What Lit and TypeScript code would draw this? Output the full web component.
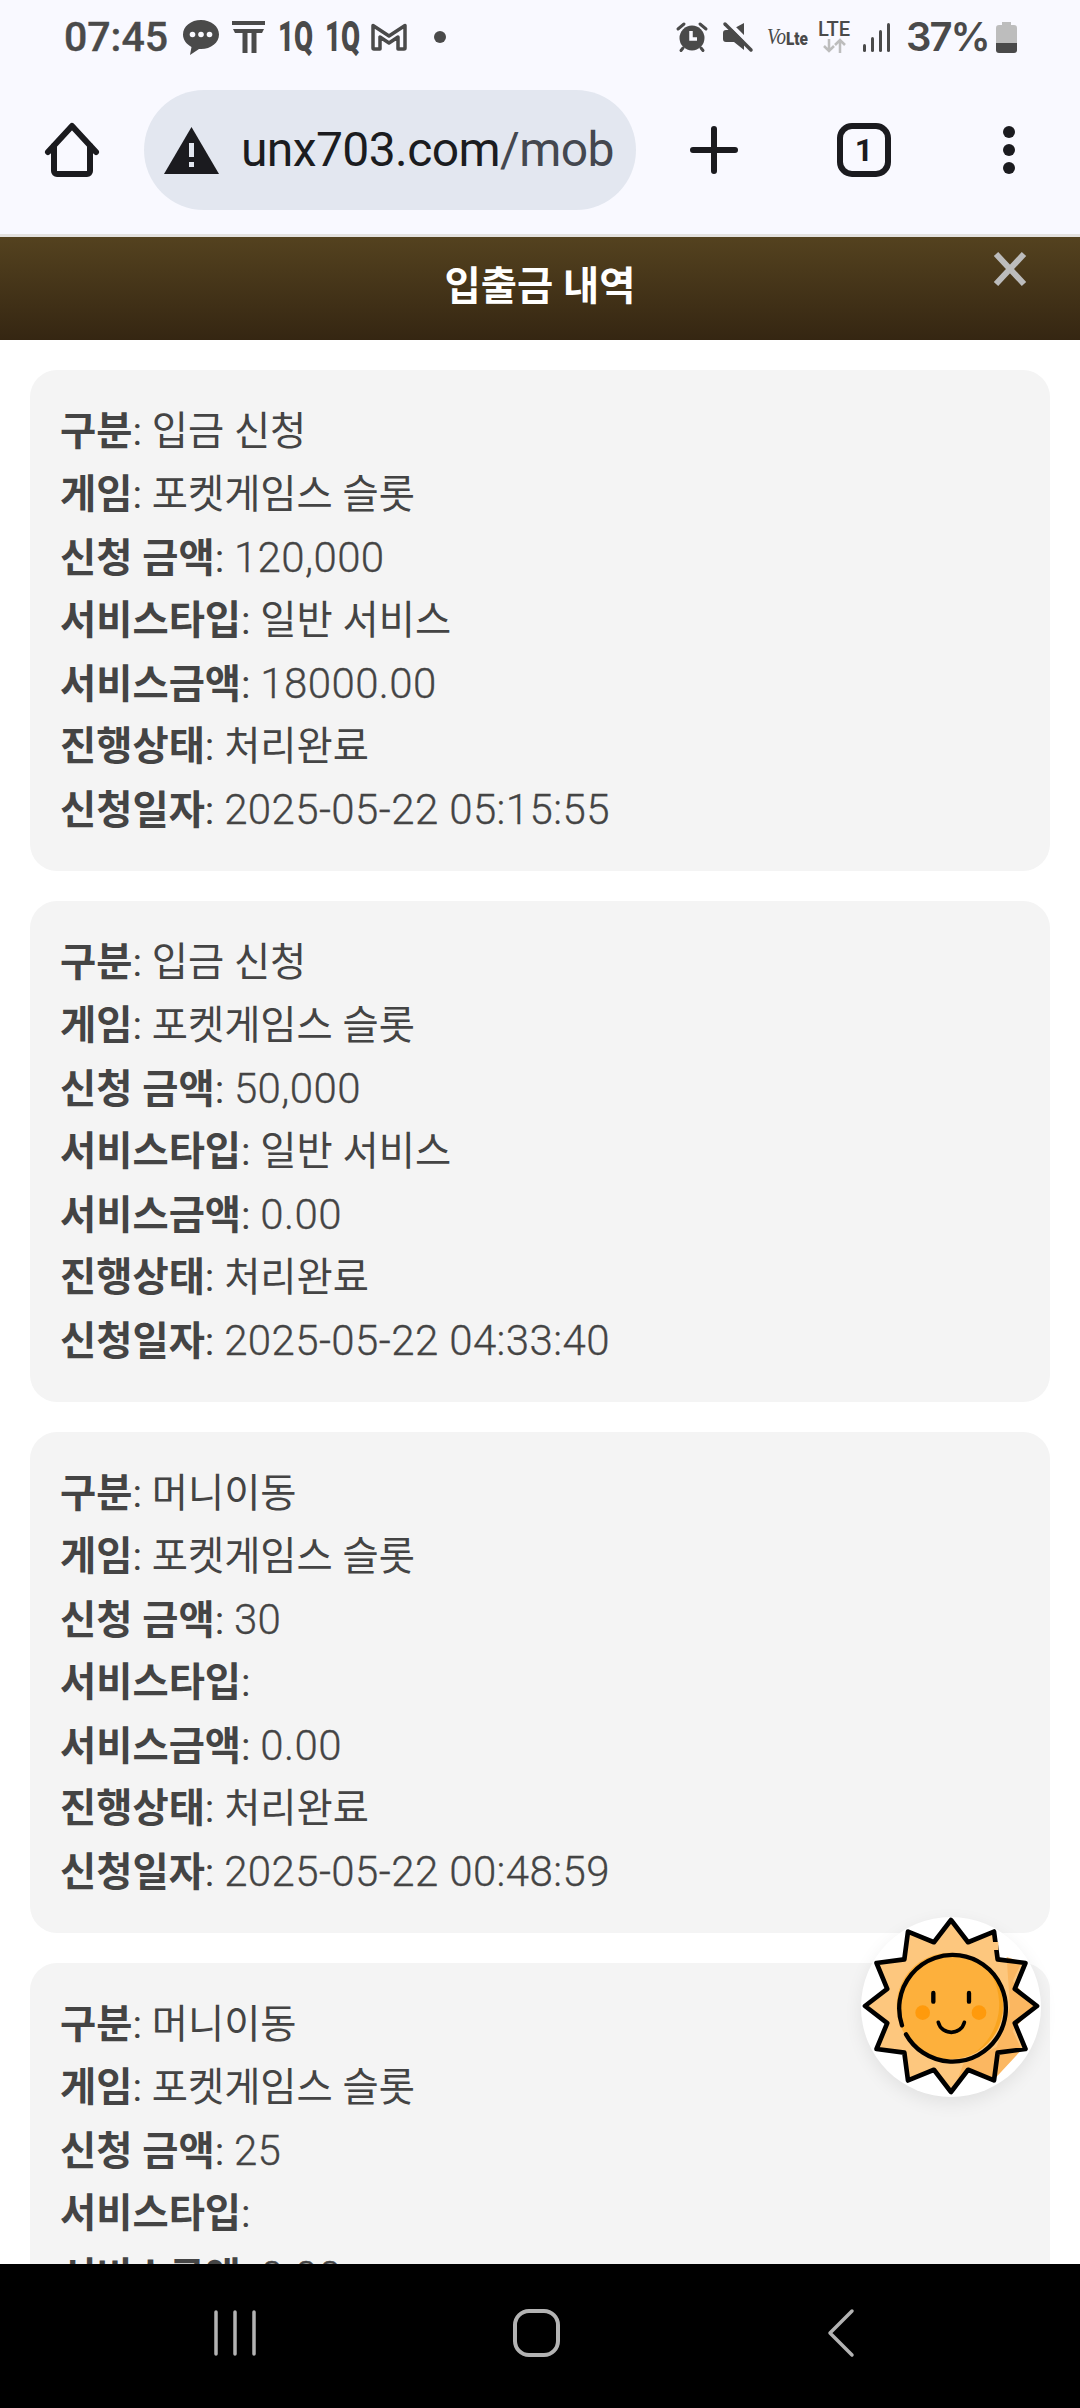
import { LitElement, html, css, svg } from "lit";
import { customElement } from "lit/decorators.js";

interface Row { label: string; value?: string; num?: boolean; }

const game = "포켓게임스 슬롯";
const status = "처리완료";

const CARDS: Row[][] = [
  [
    { label: "구분", value: "입금 신청" },
    { label: "게임", value: game },
    { label: "신청 금액", value: "120,000", num: true },
    { label: "서비스타입", value: "일반 서비스" },
    { label: "서비스금액", value: "18000.00", num: true },
    { label: "진행상태", value: status },
    { label: "신청일자", value: "2025-05-22 05:15:55", num: true },
  ],
  [
    { label: "구분", value: "입금 신청" },
    { label: "게임", value: game },
    { label: "신청 금액", value: "50,000", num: true },
    { label: "서비스타입", value: "일반 서비스" },
    { label: "서비스금액", value: "0.00", num: true },
    { label: "진행상태", value: status },
    { label: "신청일자", value: "2025-05-22 04:33:40", num: true },
  ],
  [
    { label: "구분", value: "머니이동" },
    { label: "게임", value: game },
    { label: "신청 금액", value: "30", num: true },
    { label: "서비스타입" },
    { label: "서비스금액", value: "0.00", num: true },
    { label: "진행상태", value: status },
    { label: "신청일자", value: "2025-05-22 00:48:59", num: true },
  ],
  [
    { label: "구분", value: "머니이동" },
    { label: "게임", value: game },
    { label: "신청 금액", value: "25", num: true },
    { label: "서비스타입" },
    { label: "서비스금액", value: "0.00", num: true },
  ],
];

const starPoints = Array.from({ length: 24 }, (_, i) => {
  const r = i % 2 === 0 ? 258 : 198;
  const a = (i * 15 - 90) * (Math.PI / 180);
  return `${(363 + r * Math.cos(a)).toFixed(1)},${(347 + r * Math.sin(a)).toFixed(1)}`;
}).join(" ");

const oneQ = svg`<text x="0" y="30" font-family="Roboto, sans-serif" font-weight="900" font-size="42" textLength="35" lengthAdjust="spacingAndGlyphs" fill="#4a4a4a">1Q</text>`;

@customElement("app-root")
export class AppRoot extends LitElement {
  static styles = css`
    :host { display: flex; flex-direction: column; width: 1080px; height: 2408px; overflow: hidden; position: relative; background: #fff; font-family: Roboto, "Noto Sans CJK KR", sans-serif; }
    svg { display: block; flex: none; overflow: visible; }
    .status { height: 74px; flex: none; background: #f9f9ff; display: flex; align-items: center; justify-content: space-between; padding: 0 63px 0 64px; color: #4a4a4a; }
    .group { display: flex; align-items: center; }
    .time { font-size: 41px; font-weight: 500; line-height: 1; width: 102px; white-space: nowrap; -webkit-text-stroke: 0.4px #4a4a4a; }
    .pct { font-family: Inter, Roboto, sans-serif; font-size: 40px; font-weight: 600; line-height: 1; width: 82px; white-space: nowrap; letter-spacing: -2px; }
    .m8 { margin-left: 8px; } .m10 { margin-left: 10px; } .m11 { margin-left: 11px; } .m12 { margin-left: 12px; } .m13 { margin-left: 13px; } .m14 { margin-left: 14px; } .m16 { margin-left: 16px; } .m17 { margin-left: 17px; } .m27 { margin-left: 27px; }
    .toolbar { height: 160px; flex: none; box-sizing: border-box; padding: 0 0 8px 45px; background: #f9f9ff; display: flex; align-items: center; }
    .pill { width: 492px; height: 120px; margin-left: 45px; border-radius: 60px; background: #e3e7f0; display: flex; align-items: center; padding: 0 20px 0 20px; box-sizing: border-box; flex: none; }
    .url { margin-left: 22px; flex: 1; min-width: 0; white-space: nowrap; font-size: 48px; letter-spacing: -0.6px; color: #1b1c20; line-height: 1.2; }
    .url span { color: #44474f; }
    .plus { margin-left: 54px; }
    .tabs { margin-left: 99px; width: 54px; height: 54px; box-sizing: border-box; border: 6px solid #1b1b1f; border-radius: 15px; display: flex; align-items: center; justify-content: center; font-size: 32px; font-weight: 700; color: #1b1b1f; flex: none; }
    .dots { margin-left: 112px; }
    .rule { height: 3px; flex: none; background: #e4e2df; }
    .head { height: 103px; flex: none; box-sizing: border-box; padding-bottom: 13px; position: relative; display: flex; align-items: center; justify-content: center; background: linear-gradient(180deg, #54421f 0%, #352612 100%); color: #fff; font-size: 39.375px; font-weight: 700; }
    .close { position: absolute; right: 53px; top: 15px; }
    main { flex: 1; min-height: 0; overflow: hidden; display: flex; flex-direction: column; gap: 30px; padding: 30px 30px 0; background: #fff; }
    .card { flex: none; background: #f4f4f4; border-radius: 27px; padding: 30px; font-size: 39.375px; line-height: 63px; color: #444; }
    .card div { height: 63px; white-space: nowrap; }
    .card b { font-weight: 700; }
    .num { font-size: 42px; font-weight: 300; letter-spacing: 0.4px; -webkit-text-stroke: 0.3px #444; }
    nav { height: 144px; flex: none; background: #000; display: flex; align-items: center; padding-left: 214px; padding-bottom: 6px; box-sizing: border-box; }
    .nav-home { margin-left: 257px; }
    .nav-back { margin-left: 268px; }
    .sun { position: absolute; left: 861px; top: 1917px; width: 180px; height: 180px; border-radius: 50%; background: #fff; box-shadow: 0 6px 18px rgba(0,0,0,0.08); }
  `;

  private row(r: Row) {
    return html`<div><b>${r.label}</b>: ${r.num ? html`<span class="num">${r.value}</span>` : r.value ?? ""}</div>`;
  }

  render() {
    return html`
      <div class="status">
        <div class="group">
          <span class="time">07:45</span>
          <svg class="m17" width="36" height="35" viewBox="0 0 36 35"><path fill="#4a4a4a" d="M18 0C8 0 0 6.300 0 14.500c0 5.300 3.400 9.800 8.500 12.400L7 35l9-6c.7.100 1.300.100 2 .100 10 0 18-6.500 18-14.600S28 0 18 0z"/><circle cx="9.500" cy="14.500" r="2.800" fill="#f9f9ff"/><circle cx="18" cy="14.500" r="2.800" fill="#f9f9ff"/><circle cx="26.500" cy="14.500" r="2.800" fill="#f9f9ff"/></svg>
          <svg class="m13" width="33" height="32" viewBox="0 0 33 32" fill="#4a4a4a"><rect width="33" height="4"/><path d="M1 8h31l-2 4h-5.500v20h-5V12h-4v20h-5V12H3z"/></svg>
          <svg class="m13" width="35" height="32" viewBox="0 0 35 32">${oneQ}</svg>
          <svg class="m12" width="35" height="32" viewBox="0 0 35 32">${oneQ}</svg>
          <svg class="m11" width="36" height="28" viewBox="0 0 36 28" fill="none" stroke="#4a4a4a" stroke-width="3.500" stroke-linejoin="round"><path d="M2 2.500 18 13 34 2.500V25a1 1 0 0 1-1 1h-6V14l-9 6-9-6v12H3a1 1 0 0 1-1-1z"/></svg>
          <svg class="m27" width="12" height="12" viewBox="0 0 12 12"><circle cx="6" cy="6" r="6" fill="#4a4a4a"/></svg>
        </div>
        <div class="group">
          <svg width="30" height="28" viewBox="0 0 30 28"><circle cx="15" cy="15" r="12.500" fill="#4a4a4a"/><path d="M1 6 7 1M29 6 23 1M6 25 4 27.500M24 25 26 27.500" stroke="#4a4a4a" stroke-width="3" stroke-linecap="round"/><path d="M14 8v8h6" fill="none" stroke="#f9f9ff" stroke-width="3.500"/></svg>
          <svg class="m16" width="30" height="28" viewBox="0 0 30 28"><path fill="#4a4a4a" d="M21 0v27L11 19H3a3 3 0 0 1-3-3V10a3 3 0 0 1 3-3h5z"/><path d="M7 1 30 24" stroke="#f9f9ff" stroke-width="4"/><path d="M2 1 28 27" stroke="#4a4a4a" stroke-width="3.500" stroke-linecap="round"/></svg>
          <svg class="m14" width="41" height="17" viewBox="0 0 41 17"><text x="0" y="15" font-family="Liberation Serif, serif" font-style="italic" font-size="23" textLength="19" lengthAdjust="spacingAndGlyphs" fill="#4a4a4a">Vo</text><text x="19" y="16" font-family="Roboto, sans-serif" font-weight="900" font-size="18" textLength="22" lengthAdjust="spacingAndGlyphs" fill="#4a4a4a">Lte</text></svg>
          <svg class="m10" width="32" height="32" viewBox="0 0 32 32"><text x="0" y="15" font-family="Roboto, sans-serif" font-weight="500" font-size="20" textLength="32" lengthAdjust="spacingAndGlyphs" fill="#4a4a4a">LTE</text><path d="M11 18v12M6 25l5 5 5-5M22 32V19M17 24l5-5 5 5" fill="none" stroke="#bdbdbd" stroke-width="2.500"/></svg>
          <svg class="m13" width="27" height="29" viewBox="0 0 27 29" fill="#4a4a4a"><rect x="0" y="21" width="3" height="8" rx="1.500"/><rect x="8" y="14" width="3" height="15" rx="1.500"/><rect x="16" y="7" width="3" height="22" rx="1.500"/><rect x="24" y="0" width="3" height="29" rx="1.500"/></svg>
          <span class="pct m16">37%</span>
          <svg class="m8" width="21" height="31" viewBox="0 0 21 31"><path fill="#bdbdbd" d="M6 0h9v3h3a3 3 0 0 1 3 3v15H0V6a3 3 0 0 1 3-3h3z"/><path fill="#4a4a4a" d="M0 21h21v7a3 3 0 0 1-3 3H3a3 3 0 0 1-3-3z"/></svg>
        </div>
      </div>

      <div class="toolbar">
        <svg width="54" height="54" viewBox="0 0 54 54" fill="none" stroke="#1b1b1f" stroke-width="6" stroke-linejoin="round" stroke-linecap="round"><path d="M3 29 27 3l24 26"/><path d="M9 23v25a3 3 0 0 0 3 3h30a3 3 0 0 0 3-3V23"/></svg>
        <div class="pill">
          <svg width="55" height="47" viewBox="0 0 55 47"><path fill="#1b1b1f" d="M27.500 0 55 47H0z"/><rect x="25" y="16" width="5" height="14" fill="#e3e7f0"/><rect x="25" y="35" width="5" height="5" fill="#e3e7f0"/></svg>
          <div class="url">unx703.com<span>/mob</span></div>
        </div>
        <svg class="plus" width="48" height="48" viewBox="0 0 48 48" stroke="#1b1b1f" stroke-width="6" stroke-linecap="round"><path d="M24 3v42M3 24h42"/></svg>
        <div class="tabs">1</div>
        <svg class="dots" width="12" height="48" viewBox="0 0 12 48" fill="#1b1b1f"><circle cx="6" cy="6" r="6"/><circle cx="6" cy="24" r="6"/><circle cx="6" cy="42" r="6"/></svg>
      </div>
      <div class="rule"></div>

      <header class="head">
        입출금 내역
        <svg class="close" width="34" height="34" viewBox="0 0 34 34" stroke="#bcbcbc" stroke-width="6"><path d="M3 2 31 32M31 2 3 32"/></svg>
      </header>

      <main>
        ${CARDS.map((rows) => html`<section class="card">${rows.map((r) => this.row(r))}</section>`)}
      </main>

      <nav>
        <svg width="42" height="46" viewBox="0 0 42 46" stroke="#b3b3b3" stroke-width="3.500" stroke-linecap="round"><path d="M2 2v42M21 2v42M40 2v42"/></svg>
        <svg class="nav-home" width="47" height="48" viewBox="0 0 47 48" fill="none" stroke="#b3b3b3" stroke-width="4"><rect x="2" y="2" width="43" height="44" rx="14"/></svg>
        <svg class="nav-back" width="26" height="48" viewBox="0 0 26 48" fill="none" stroke="#b3b3b3" stroke-width="3.500" stroke-linecap="round" stroke-linejoin="round"><path d="M24 2 2 24l22 22" /></svg>
      </nav>

      <div class="sun">
        <svg width="180" height="180" viewBox="93 80 540 540">
          <polygon points=${starPoints} fill="#fdc77e"/>
          <path d="M530 200 575 215 548 272 612 347 548 422 575 478 490 570 415 540 380 575 400 520 500 470 540 350z" fill="#fbb761"/>
          <polygon points=${starPoints} fill="none" stroke="#000" stroke-width="14" stroke-linejoin="round"/>
          <path d="M497 155v24" stroke="#fdc77e" stroke-width="16"/>
          <circle cx="360" cy="347" r="160" fill="#fdb03c"/>
          <path d="M470 232a160 160 0 0 1-40 258 180 180 0 0 0 40-258z" fill="#f9a41f"/>
          <path d="M228 432A160 160 0 1 0 216 405" fill="none" stroke="#000" stroke-width="13" stroke-linecap="round"/>
          <circle cx="278" cy="367" r="22" fill="#ff9a0c"/>
          <circle cx="447" cy="367" r="22" fill="#ff9a0c"/>
          <path d="M310 308v26M417 308v26" stroke="#000" stroke-width="13" stroke-linecap="round"/>
          <path d="M325 396c10 40 68 40 78 0" fill="none" stroke="#000" stroke-width="11" stroke-linecap="round"/>
        </svg>
      </div>
    `;
  }
}
